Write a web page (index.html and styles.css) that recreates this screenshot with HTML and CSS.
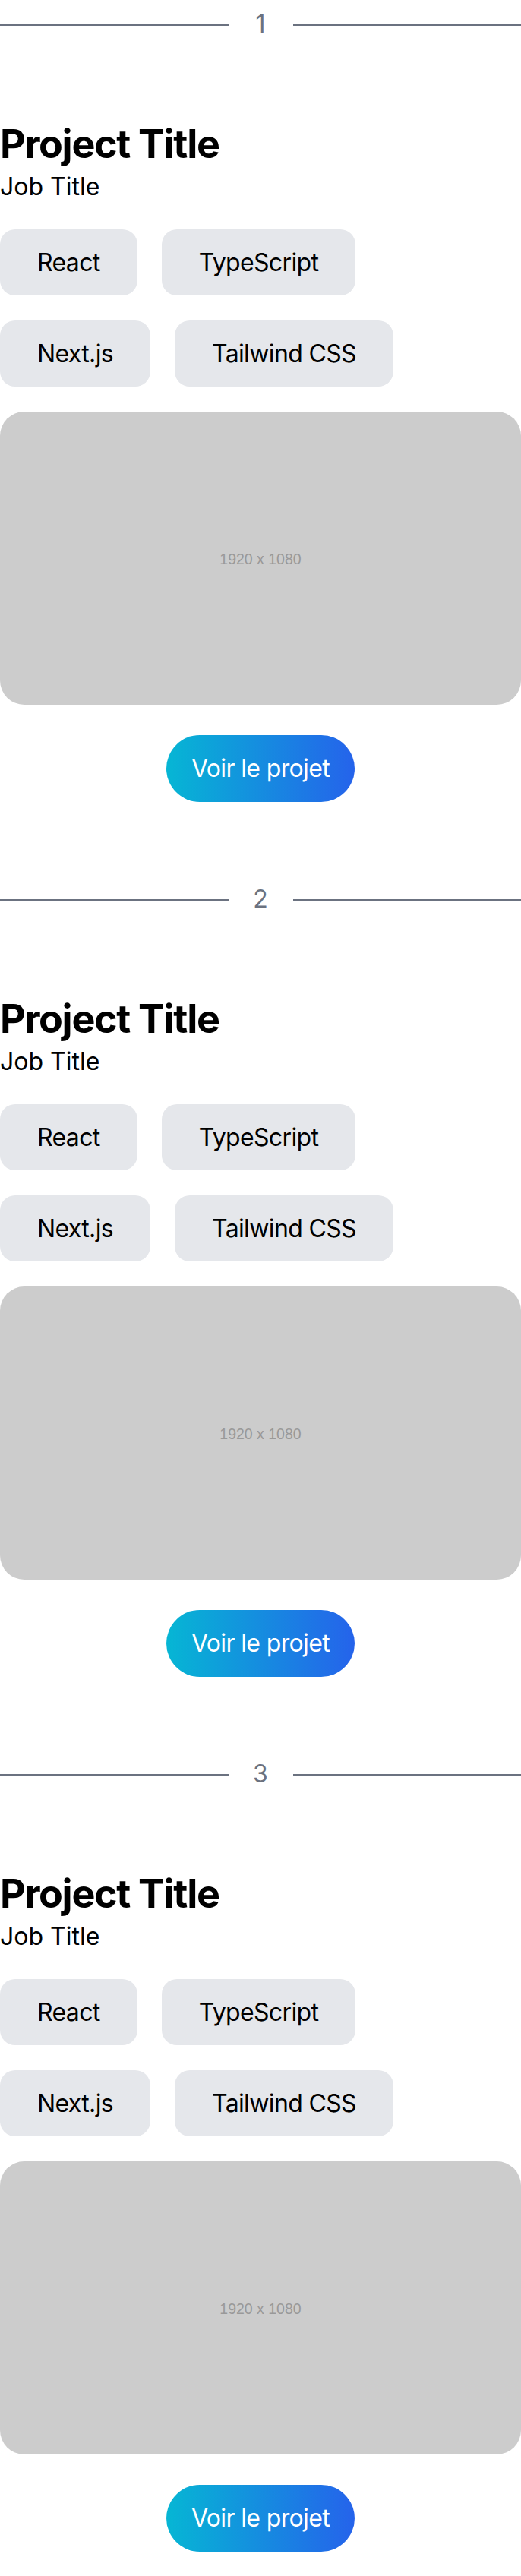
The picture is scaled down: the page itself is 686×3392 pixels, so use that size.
FILE: index.html
```html
<!DOCTYPE html>
<html lang="fr">
<head>
<meta charset="utf-8">
<title>Projets</title>
<link rel="stylesheet" href="styles.css">
</head>
<body>
<main class="page">
  <section class="project">
    <div class="divider"><span class="line"></span><span class="num">1</span><span class="line"></span></div>
    <h2 class="title">Project Title</h2>
    <p class="job">Job Title</p>
    <ul class="tags">
      <li class="tag">React</li>
      <li class="tag">TypeScript</li>
      <li class="tag">Next.js</li>
      <li class="tag">Tailwind CSS</li>
    </ul>
    <div class="media"><span class="media-label">1920 x 1080</span></div>
    <div class="cta-wrap"><a class="cta" href="#">Voir le projet</a></div>
  </section>
  <section class="project">
    <div class="divider"><span class="line"></span><span class="num">2</span><span class="line"></span></div>
    <h2 class="title">Project Title</h2>
    <p class="job">Job Title</p>
    <ul class="tags">
      <li class="tag">React</li>
      <li class="tag">TypeScript</li>
      <li class="tag">Next.js</li>
      <li class="tag">Tailwind CSS</li>
    </ul>
    <div class="media"><span class="media-label">1920 x 1080</span></div>
    <div class="cta-wrap"><a class="cta" href="#">Voir le projet</a></div>
  </section>
  <section class="project">
    <div class="divider"><span class="line"></span><span class="num">3</span><span class="line"></span></div>
    <h2 class="title">Project Title</h2>
    <p class="job">Job Title</p>
    <ul class="tags">
      <li class="tag">React</li>
      <li class="tag">TypeScript</li>
      <li class="tag">Next.js</li>
      <li class="tag">Tailwind CSS</li>
    </ul>
    <div class="media"><span class="media-label">1920 x 1080</span></div>
    <div class="cta-wrap"><a class="cta" href="#">Voir le projet</a></div>
  </section>
</main>
</body>
</html>
```
FILE: styles.css
```css
* { box-sizing: border-box; }
html, body { margin: 0; padding: 0; background: #ffffff; }
body {
  font-family: Inter, "Noto Sans", "Liberation Sans", sans-serif;
  color: #000000;
  width: 686px;
}
.page {
  display: flex;
  flex-direction: column;
  gap: 96px;
  padding-bottom: 32px;
}
.project {
  display: flex;
  flex-direction: column;
}
.divider {
  display: flex;
  align-items: center;
  gap: 32px;
  height: 64px;
}
.line {
  flex: 1;
  height: 2px;
  margin-top: 2px;
  background: #6b7280;
}
.num {
  min-width: 21px;
  text-align: center;
  font-size: 32px;
  line-height: 64px;
  color: #6b7280;
}
.title {
  margin: 100px 0 0;
  font-size: 52px;
  line-height: 52px;
  font-weight: 700;
  letter-spacing: -0.025em;
}
.job {
  margin: 6px 0 0;
  font-size: 32px;
  line-height: 48px;
}
.tags {
  list-style: none;
  margin: 32px 0 0;
  padding: 0;
  display: flex;
  flex-wrap: wrap;
  column-gap: 32px;
  row-gap: 33px;
}
.tag {
  background: #e5e7eb;
  border-radius: 20px;
  padding: 20px 49px;
  font-size: 32px;
  line-height: 47px;
  letter-spacing: -0.02em;
}
.media {
  margin-top: 33px;
  width: 100%;
  aspect-ratio: 16 / 9;
  padding-top: 3px;
  background: #cccccc;
  border-radius: 32px;
  display: flex;
  align-items: center;
  justify-content: center;
}
.media-label {
  font-family: "Liberation Sans", Arial, sans-serif;
  font-size: 19.5px;
  color: #999999;
}
.cta-wrap {
  margin-top: 40px;
  display: flex;
  justify-content: center;
}
.cta {
  display: inline-block;
  padding: 20px 33px;
  border-radius: 9999px;
  background: linear-gradient(to right, #06b6d4, #2563eb);
  color: #ffffff;
  text-decoration: none;
  font-size: 32px;
  line-height: 48px;
  letter-spacing: -0.02em;
}
```
